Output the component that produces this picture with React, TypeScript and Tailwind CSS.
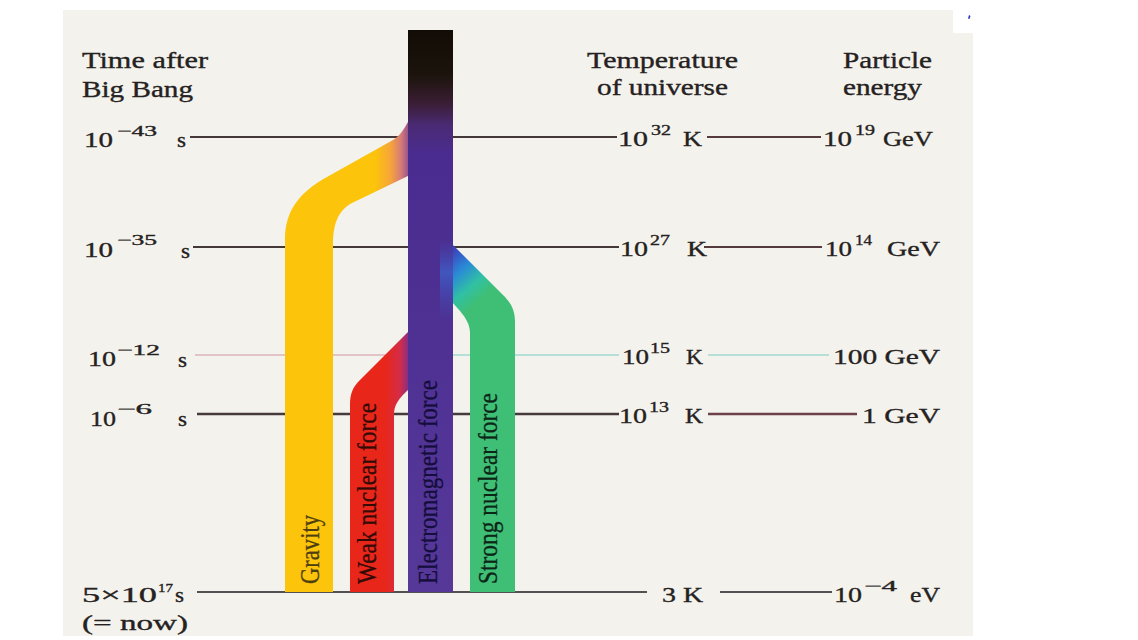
import React from "react";

type Label = { t: string; x: number; y: number; len: number; size?: number };

const serif = "'Liberation Serif', 'Times New Roman', serif";

// left column: time after big bang
const leftLabels: Label[] = [
  { t: "Time after", x: 82, y: 68, len: 126, size: 23 },
  { t: "Big Bang", x: 82, y: 97, len: 111, size: 23 },
  { t: "10", x: 84, y: 147, len: 29 },
  { t: "−43", x: 117, y: 136, len: 40, size: 15 },
  { t: "s", x: 177, y: 147, len: 9 },
  { t: "10", x: 84, y: 257, len: 29 },
  { t: "−35", x: 117, y: 245, len: 40, size: 15 },
  { t: "s", x: 181, y: 258, len: 9 },
  { t: "10", x: 88, y: 366, len: 28 },
  { t: "−12", x: 117, y: 355, len: 43, size: 15 },
  { t: "s", x: 178, y: 367, len: 9 },
  { t: "10", x: 90, y: 426, len: 26 },
  { t: "−6", x: 117, y: 414, len: 35, size: 15 },
  { t: "s", x: 178, y: 426, len: 9 },
  { t: "5×10", x: 82, y: 602, len: 75 },
  { t: "17", x: 158, y: 592, len: 15, size: 13 },
  { t: "s", x: 175, y: 602, len: 9 },
  { t: "(= now)", x: 82, y: 630, len: 106 },
];

// right columns: temperature + particle energy
const rightLabels: Label[] = [
  { t: "Temperature", x: 587, y: 68, len: 151, size: 23 },
  { t: "of universe", x: 597, y: 95, len: 131, size: 23 },
  { t: "Particle", x: 843, y: 68, len: 89, size: 23 },
  { t: "energy", x: 843, y: 95, len: 79, size: 23 },

  { t: "10", x: 618, y: 146, len: 30 },
  { t: "32", x: 651, y: 135, len: 20, size: 15 },
  { t: "K", x: 683, y: 146, len: 19 },
  { t: "10", x: 823, y: 146, len: 29 },
  { t: "19", x: 855, y: 135, len: 20, size: 15 },
  { t: "GeV", x: 883, y: 146, len: 50 },

  { t: "10", x: 620, y: 256, len: 28 },
  { t: "27", x: 650, y: 245, len: 20, size: 15 },
  { t: "K", x: 687, y: 256, len: 20 },
  { t: "10", x: 825, y: 256, len: 27 },
  { t: "14", x: 855, y: 245, len: 17, size: 15 },
  { t: "GeV", x: 887, y: 256, len: 53 },

  { t: "10", x: 622, y: 364, len: 27 },
  { t: "15", x: 650, y: 353, len: 20, size: 15 },
  { t: "K", x: 686, y: 364, len: 17 },
  { t: "100 GeV", x: 833, y: 364, len: 107 },

  { t: "10", x: 619, y: 423, len: 28 },
  { t: "13", x: 649, y: 412, len: 20, size: 15 },
  { t: "K", x: 685, y: 423, len: 18 },
  { t: "1 GeV", x: 862, y: 423, len: 78 },

  { t: "3 K", x: 662, y: 602, len: 41 },
  { t: "10", x: 834, y: 602, len: 28 },
  { t: "−4", x: 864, y: 591, len: 33, size: 15 },
  { t: "eV", x: 910, y: 602, len: 30 },
];

const forceLabels = [
  { t: "Gravity", x: 319, len: 69, fill: "#4e3e10" },
  { t: "Weak nuclear force", x: 376, len: 181, fill: "#320a06" },
  { t: "Electromagnetic force", x: 437, len: 204, fill: "#150e3c" },
  { t: "Strong nuclear force", x: 497, len: 191, fill: "#0b2616" },
];

const TextLabel: React.FC<{ l: Label; fill?: string }> = ({
  l,
  fill = "#252121",
}) => (
  <text
    x={l.x}
    y={l.y}
    textLength={l.len}
    lengthAdjust="spacingAndGlyphs"
    fontFamily={serif}
    fontSize={l.size ?? 22}
    fill={fill}
    stroke={fill}
    strokeWidth={0.35}
  >
    {l.t}
  </text>
);

const Figure: React.FC = () => (
  <svg width={910} height={626} viewBox="63 10 910 626" className="block">
    <defs>
      <linearGradient id="em" x1="0" y1="30" x2="0" y2="592" gradientUnits="userSpaceOnUse">
        <stop offset="0" stopColor="#120c06" />
        <stop offset="0.08" stopColor="#1c140c" />
        <stop offset="0.13" stopColor="#3a1e34" />
        <stop offset="0.17" stopColor="#4a2a74" />
        <stop offset="0.22" stopColor="#4a2c90" />
        <stop offset="1" stopColor="#553898" />
      </linearGradient>
      <linearGradient id="grav" x1="375" y1="0" x2="410" y2="0" gradientUnits="userSpaceOnUse">
        <stop offset="0" stopColor="#fcc40a" />
        <stop offset="0.45" stopColor="#f6a43a" />
        <stop offset="0.75" stopColor="#d47a7a" />
        <stop offset="1" stopColor="#8a4a8e" />
      </linearGradient>
      <linearGradient id="weak" x1="385" y1="0" x2="410" y2="0" gradientUnits="userSpaceOnUse">
        <stop offset="0" stopColor="#e8261a" />
        <stop offset="0.6" stopColor="#d42c48" />
        <stop offset="1" stopColor="#7a2e8e" />
      </linearGradient>
      <linearGradient id="strong" x1="450" y1="255" x2="485" y2="295" gradientUnits="userSpaceOnUse">
        <stop offset="0" stopColor="#3a48c0" />
        <stop offset="0.35" stopColor="#2a8ad6" />
        <stop offset="0.7" stopColor="#30c0a4" />
        <stop offset="1" stopColor="#3fbf76" />
      </linearGradient>
      <linearGradient id="emEdge" x1="0" y1="240" x2="0" y2="320" gradientUnits="userSpaceOnUse">
        <stop offset="0" stopColor="#3a58c8" stopOpacity="0" />
        <stop offset="0.4" stopColor="#3a68d0" stopOpacity="0.7" />
        <stop offset="1" stopColor="#3a58c8" stopOpacity="0" />
      </linearGradient>
    </defs>

    {/* top-right notch of the scan + stray marks */}
    <rect x={953} y={10} width={20} height={23} fill="#ffffff" />
    <path d="M969,15 l1.5,1 l-1,3 l-1.5,-0.5 z" fill="#2438c8" />
    <circle cx={62} cy={608} r={1} fill="#555" />

    {/* time lines */}
    <g strokeWidth={2}>
      <line x1={190} y1={137} x2={617} y2={137} stroke="#453838" />
      <line x1={707} y1={137} x2={821} y2={137} stroke="#543a3c" />
      <line x1={193} y1={247} x2={619} y2={247} stroke="#453838" />
      <line x1={704} y1={247} x2={822} y2={247} stroke="#543a3c" />
      <line x1={195} y1={355} x2={408} y2={355} stroke="#dcb4bc" strokeWidth={1.3} />
      <line x1={453} y1={355} x2={619} y2={355} stroke="#a2d8d2" strokeWidth={1.6} />
      <line x1={708} y1={355} x2={829} y2={355} stroke="#a2d8d2" strokeWidth={1.6} />
      <line x1={197} y1={414} x2={619} y2={414} stroke="#463a3c" strokeWidth={2.6} />
      <line x1={708} y1={414} x2={857} y2={414} stroke="#6e4048" strokeWidth={2.6} />
      <line x1={197} y1={592} x2={647} y2={592} stroke="#525050" />
      <line x1={720} y1={592} x2={832} y2={592} stroke="#525050" />
    </g>

    {/* force bands */}
    <path
      d="M410,118 C405,128 400,136 393,140 L327,177 C300,192 285,210 285,240 L285,592 L333,592 L333,245 C333,226 337,211 352,203 L410,175 Z"
      fill="url(#grav)"
    />
    <path
      d="M410,330 L360,380 C353,387 350,393 350,405 L350,592 L394,592 L394,415 C394,405 398,399 410,388 Z"
      fill="url(#weak)"
    />
    <path
      d="M452,244 L503,295 C511,303 515,310 515,322 L515,592 L470,592 L470,333 C470,325 466,318 460,311 L452,302 Z"
      fill="url(#strong)"
    />
    <rect x={408} y={30} width={45} height={562} fill="url(#em)" />
    <rect x={440} y={240} width={13} height={80} fill="url(#emEdge)" />

    {forceLabels.map((f) => (
      <text
        key={f.t}
        transform={`translate(${f.x},584) rotate(-90)`}
        textLength={f.len}
        lengthAdjust="spacingAndGlyphs"
        fontFamily={serif}
        fontSize={27}
        fill={f.fill}
        stroke={f.fill}
        strokeWidth={0.3}
      >
        {f.t}
      </text>
    ))}

    {leftLabels.map((l, i) => (
      <TextLabel key={"l" + i} l={l} />
    ))}
    {rightLabels.map((l, i) => (
      <TextLabel key={"r" + i} l={l} />
    ))}
  </svg>
);

export default function App() {
  return (
    <div className="w-[1138px] h-[640px] bg-white overflow-hidden pt-[10px] pl-[63px]">
      <div className="w-[910px] h-[626px] bg-[#f3f2ec]">
        <Figure />
      </div>
    </div>
  );
}
